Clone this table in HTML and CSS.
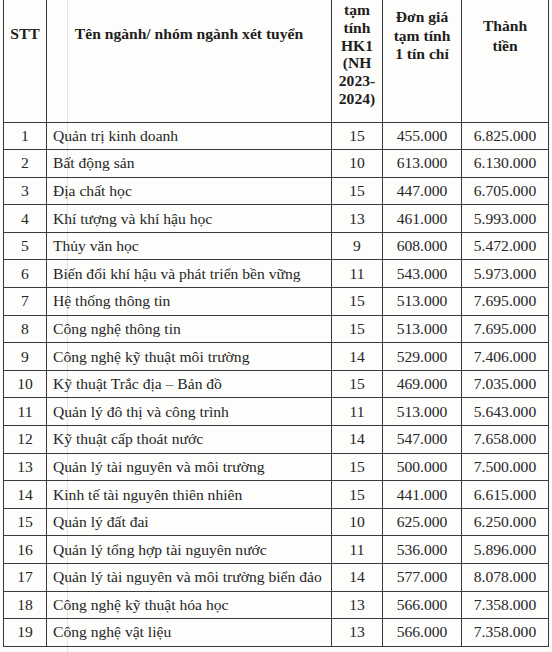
FILE: index.html
```html
<!DOCTYPE html>
<html lang="vi">
<head>
<meta charset="utf-8">
<title>Học phí</title>
<link rel="stylesheet" href="styles.css">
</head>
<body>
<table class="fee">
  <colgroup>
    <col class="c-stt"><col class="c-name"><col class="c-tc"><col class="c-price"><col class="c-total">
  </colgroup>
  <thead>
    <tr class="head">
      <th class="h-stt">STT</th>
      <th class="h-name">Tên ngành/ nhóm ngành xét tuyển</th>
      <th class="h-tc">tạm<br>tính<br>HK1<br>(NH<br>2023-<br>2024)</th>
      <th class="h-price">Đơn giá<br>tạm tính<br>1 tín chỉ</th>
      <th class="h-total">Thành<br>tiền</th>
    </tr>
  </thead>
  <tbody>
    <tr><td>1</td><td class="name">Quản trị kinh doanh</td><td>15</td><td>455.000</td><td>6.825.000</td></tr>
    <tr><td>2</td><td class="name">Bất động sản</td><td>10</td><td>613.000</td><td>6.130.000</td></tr>
    <tr><td>3</td><td class="name">Địa chất học</td><td>15</td><td>447.000</td><td>6.705.000</td></tr>
    <tr><td>4</td><td class="name">Khí tượng và khí hậu học</td><td>13</td><td>461.000</td><td>5.993.000</td></tr>
    <tr><td>5</td><td class="name">Thủy văn học</td><td>9</td><td>608.000</td><td>5.472.000</td></tr>
    <tr><td>6</td><td class="name">Biến đổi khí hậu và phát triển bền vững</td><td>11</td><td>543.000</td><td>5.973.000</td></tr>
    <tr><td>7</td><td class="name">Hệ thống thông tin</td><td>15</td><td>513.000</td><td>7.695.000</td></tr>
    <tr><td>8</td><td class="name">Công nghệ thông tin</td><td>15</td><td>513.000</td><td>7.695.000</td></tr>
    <tr><td>9</td><td class="name">Công nghệ kỹ thuật môi trường</td><td>14</td><td>529.000</td><td>7.406.000</td></tr>
    <tr><td>10</td><td class="name">Kỹ thuật Trắc địa – Bản đồ</td><td>15</td><td>469.000</td><td>7.035.000</td></tr>
    <tr><td>11</td><td class="name">Quản lý đô thị và công trình</td><td>11</td><td>513.000</td><td>5.643.000</td></tr>
    <tr><td>12</td><td class="name">Kỹ thuật cấp thoát nước</td><td>14</td><td>547.000</td><td>7.658.000</td></tr>
    <tr><td>13</td><td class="name">Quản lý tài nguyên và môi trường</td><td>15</td><td>500.000</td><td>7.500.000</td></tr>
    <tr><td>14</td><td class="name">Kinh tế tài nguyên thiên nhiên</td><td>15</td><td>441.000</td><td>6.615.000</td></tr>
    <tr><td>15</td><td class="name">Quản lý đất đai</td><td>10</td><td>625.000</td><td>6.250.000</td></tr>
    <tr><td>16</td><td class="name">Quản lý tổng hợp tài nguyên nước</td><td>11</td><td>536.000</td><td>5.896.000</td></tr>
    <tr><td>17</td><td class="name">Quản lý tài nguyên và môi trường biển đảo</td><td>14</td><td>577.000</td><td>8.078.000</td></tr>
    <tr><td>18</td><td class="name">Công nghệ kỹ thuật hóa học</td><td>13</td><td>566.000</td><td>7.358.000</td></tr>
    <tr><td>19</td><td class="name">Công nghệ vật liệu</td><td>13</td><td>566.000</td><td>7.358.000</td></tr>
  </tbody>
</table>
</body>
</html>
```

FILE: styles.css
```css
html, body {
  margin: 0;
  padding: 0;
}
body {
  background-color: #fdfdfb;
  background-image: linear-gradient(to right, transparent 67px, #e4e4e2 67px, #e4e4e2 68px, transparent 68px);
  font-family: "Liberation Serif", "Times New Roman", serif;
  color: #262626;
  width: 552px;
  height: 652px;
  overflow: hidden;
}
.fee {
  margin-left: 3px;
  border-collapse: collapse;
  table-layout: fixed;
  width: 545px;
  font-size: 15.6px;
}
.c-stt { width: 43px; }
.c-name { width: 285px; }
.c-tc { width: 51px; }
.c-price { width: 79px; }
.c-total { width: 87px; }

.fee th, .fee td {
  border: 1.5px solid #3a3a3a;
  padding: 0;
  text-align: center;
}
.head {
  height: 122px;
}
.fee th {
  border-top: none;
  vertical-align: top;
  font-weight: bold;
  line-height: 17.8px;
  color: #1e1e1e;
}
.fee th.h-stt, .fee th.h-name { padding-top: 25px; }
.fee th.h-tc { padding-top: 1px; }
.fee th.h-price { padding-top: 8px; line-height: 18.5px; }
.fee th.h-total { padding-top: 16px; line-height: 19.5px; }

.fee tbody tr {
  height: 27.6px;
}
.fee td {
  line-height: 20px;
  vertical-align: middle;
}
.fee td.name {
  text-align: left;
  padding-left: 6px;
  white-space: nowrap;
}
```
